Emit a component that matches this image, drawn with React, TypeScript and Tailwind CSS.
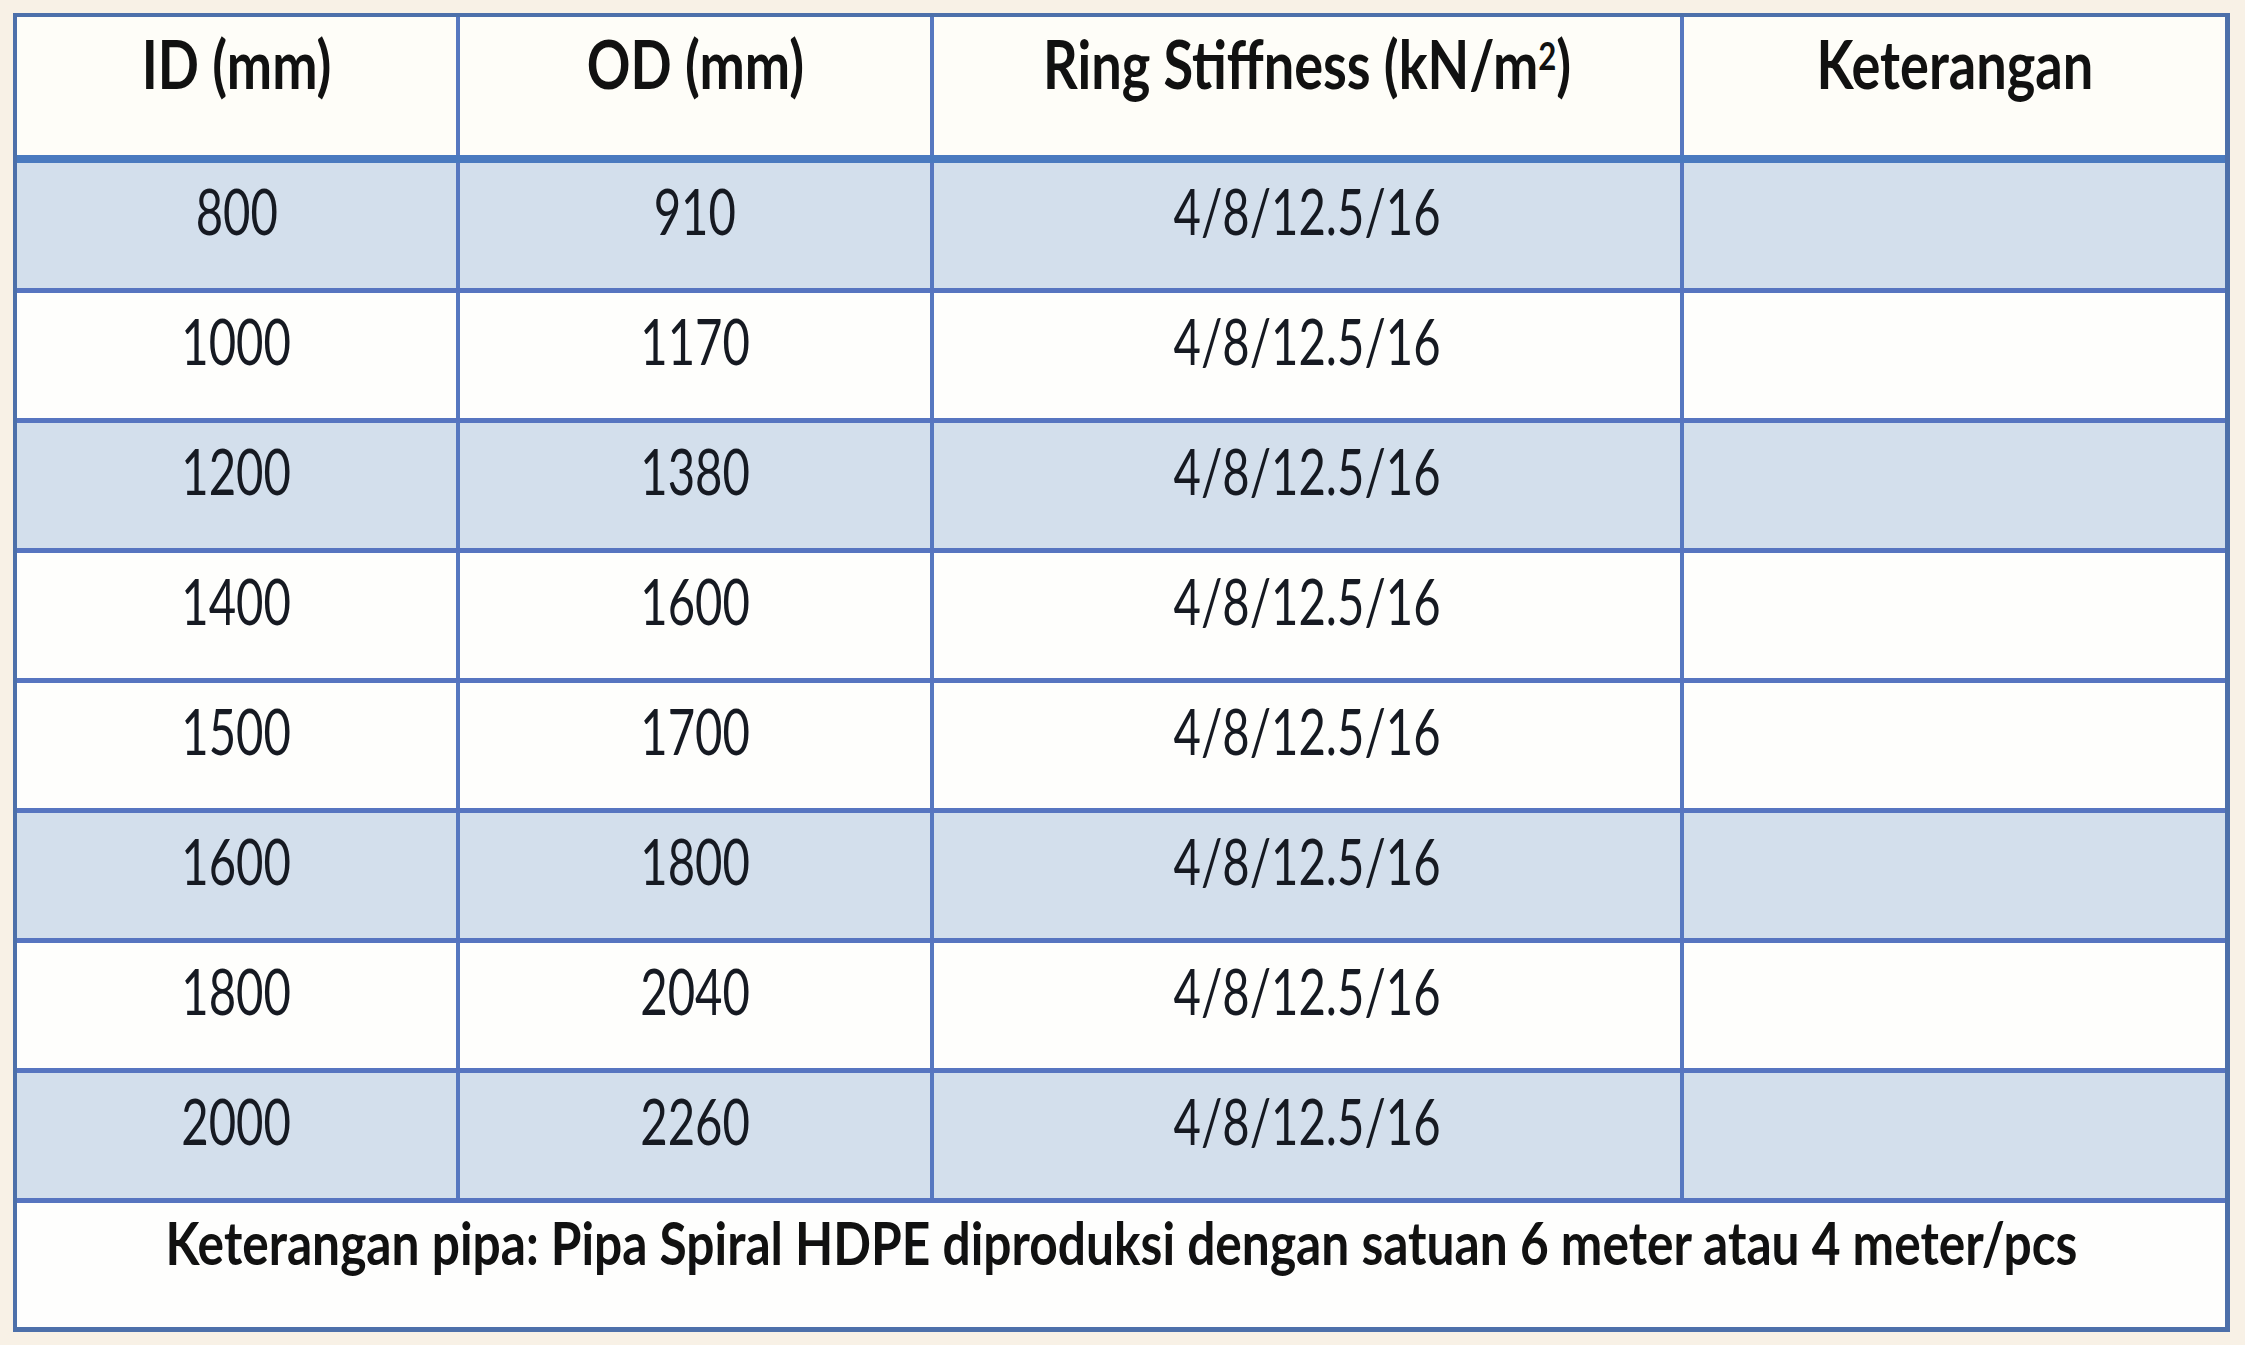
const rows = [
  { id: "800", od: "910", shaded: true },
  { id: "1000", od: "1170", shaded: false },
  { id: "1200", od: "1380", shaded: true },
  { id: "1400", od: "1600", shaded: false },
  { id: "1500", od: "1700", shaded: false },
  { id: "1600", od: "1800", shaded: true },
  { id: "1800", od: "2040", shaded: false },
  { id: "2000", od: "2260", shaded: true },
];

const stiffness = "4/8/12.5/16";

function HeadText({ children }: { children: React.ReactNode }) {
  return (
    <span className="inline-block shrink-0 whitespace-nowrap scale-x-[0.82] text-[66px] leading-[1.2] font-bold text-[#111]">
      {children}
    </span>
  );
}

function BodyText({ children }: { children: React.ReactNode }) {
  return (
    <span className="inline-block shrink-0 whitespace-nowrap scale-x-[0.75] text-[63px] leading-[1.2] text-[#161a22]">
      {children}
    </span>
  );
}

export default function App() {
  return (
    <div className="min-h-screen bg-[#f8f1e6] pt-[13px] pl-[13px] pr-[15px] pb-[13px] font-['Lato','Open_Sans',sans-serif]">
      <div className="w-[2217px] border-t-4 border-l-4 border-r-[5px] border-b-[5px] border-[#4d70aa] bg-white">
        {/* header */}
        <div className="flex h-[146px] border-b-8 border-[#4a7abf] bg-[#fefdf8]">
          <div className="flex w-[443px] justify-center border-r-4 border-[#5778c0] pt-[7px]">
            <HeadText>ID (mm)</HeadText>
          </div>
          <div className="flex w-[474px] justify-center border-r-4 border-[#5778c0] pt-[7px]">
            <HeadText>OD (mm)</HeadText>
          </div>
          <div className="flex w-[750px] justify-center border-r-4 border-[#5778c0] pt-[7px]">
            <HeadText>
              Ring Stiffness (kN/m<sup className="text-[38px]">2</sup>)
            </HeadText>
          </div>
          <div className="flex flex-1 justify-center pt-[7px]">
            <HeadText>Keterangan</HeadText>
          </div>
        </div>

        {/* data rows */}
        {rows.map((row) => (
          <div
            key={row.id}
            className={`flex h-[130px] border-b-[5px] border-[#5775c0] ${
              row.shaded ? "bg-[#d3dfec]" : "bg-[#fefefc]"
            }`}
          >
            <div className="flex w-[443px] justify-center border-r-4 border-[#5778c0] pt-[10px]">
              <BodyText>{row.id}</BodyText>
            </div>
            <div className="flex w-[474px] justify-center border-r-4 border-[#5778c0] pt-[10px]">
              <BodyText>{row.od}</BodyText>
            </div>
            <div className="flex w-[750px] justify-center border-r-4 border-[#5778c0] pt-[10px]">
              <BodyText>{stiffness}</BodyText>
            </div>
            <div className="flex-1" />
          </div>
        ))}

        {/* footer note */}
        <div className="flex h-[124px] justify-center bg-[#fefefd] pt-[5px]">
          <span className="inline-block shrink-0 whitespace-nowrap scale-x-[0.842] text-[59px] leading-[1.2] font-bold text-[#111]">
            Keterangan pipa: Pipa Spiral HDPE diproduksi dengan satuan 6 meter atau 4 meter/pcs
          </span>
        </div>
      </div>
    </div>
  );
}
